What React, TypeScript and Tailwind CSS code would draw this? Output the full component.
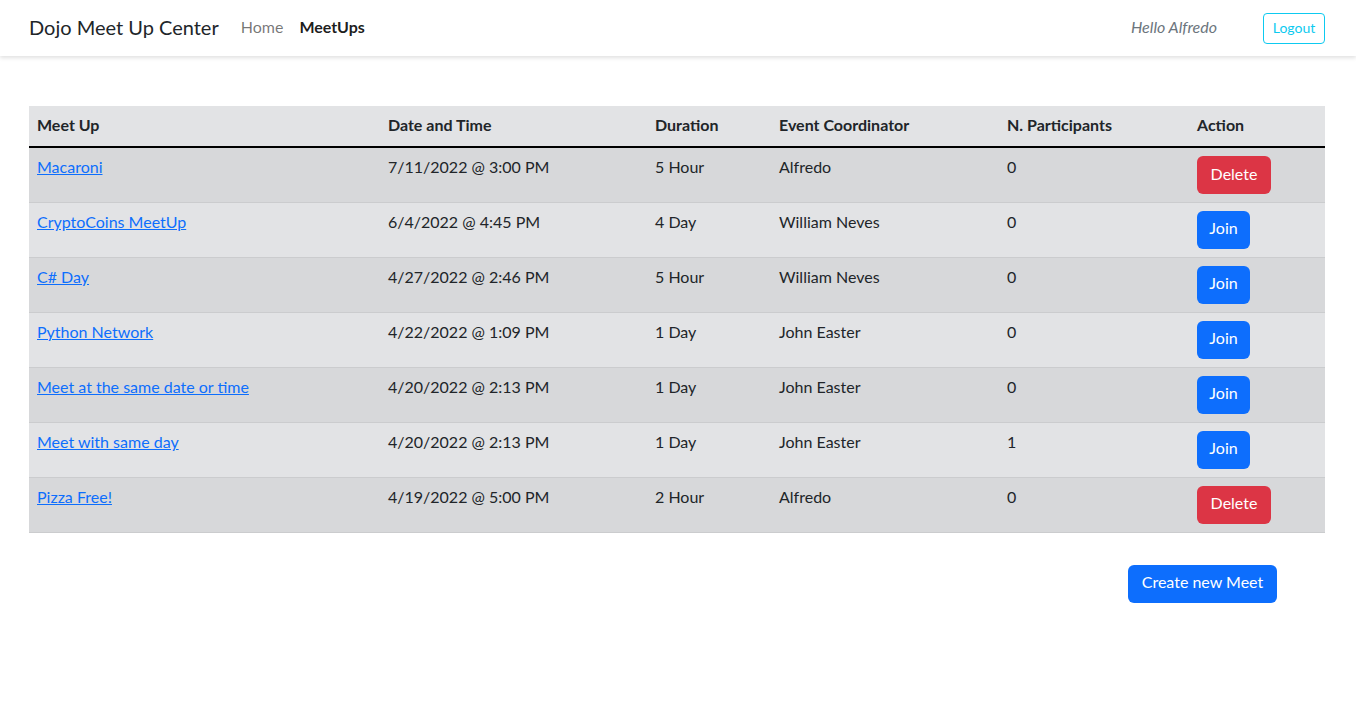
import React from 'react';

type Meet = {
    title: string;
    date: string;
    duration: string;
    coordinator: string;
    participants: number;
    action: 'Delete' | 'Join';
};

const meets: Meet[] = [
    { title: 'Macaroni', date: '7/11/2022 @ 3:00 PM', duration: '5 Hour', coordinator: 'Alfredo', participants: 0, action: 'Delete' },
    { title: 'CryptoCoins MeetUp', date: '6/4/2022 @ 4:45 PM', duration: '4 Day', coordinator: 'William Neves', participants: 0, action: 'Join' },
    { title: 'C# Day', date: '4/27/2022 @ 2:46 PM', duration: '5 Hour', coordinator: 'William Neves', participants: 0, action: 'Join' },
    { title: 'Python Network', date: '4/22/2022 @ 1:09 PM', duration: '1 Day', coordinator: 'John Easter', participants: 0, action: 'Join' },
    { title: 'Meet at the same date or time', date: '4/20/2022 @ 2:13 PM', duration: '1 Day', coordinator: 'John Easter', participants: 0, action: 'Join' },
    { title: 'Meet with same day', date: '4/20/2022 @ 2:13 PM', duration: '1 Day', coordinator: 'John Easter', participants: 1, action: 'Join' },
    { title: 'Pizza Free!', date: '4/19/2022 @ 5:00 PM', duration: '2 Hour', coordinator: 'Alfredo', participants: 0, action: 'Delete' },
];

export default function App(): JSX.Element {
    return (
        <div className="min-h-screen bg-white text-[#212529] font-['Lato','Noto_Sans',sans-serif]">
            {/* Navbar */}
            <nav className="h-14 flex items-center pl-[29px] pr-[31px] pb-[2px] bg-white shadow-[0_2px_4px_rgba(0,0,0,0.12)]">
                <span className="text-xl mr-[22px]">Dojo Meet Up Center</span>
                <a className="text-base text-black/55 mr-4">Home</a>
                <a className="text-base font-bold text-black/90">MeetUps</a>
                <span className="ml-auto italic text-base text-[#6c757d] mr-[46px]">Hello Alfredo</span>
                <button className="h-[31px] w-[62px] mt-[2px] pb-px text-sm text-[#0dcaf0] border border-[#0dcaf0] rounded">Logout</button>
            </nav>

            <div className="pl-[29px] pr-[31px] pt-[50px]">
                <table className="w-full border-collapse text-base">
                    <thead>
                        <tr className="bg-[#e2e3e5] border-b-2 border-black text-left">
                            <th className="w-[351px] pt-[7px] pb-[9px] px-2 h-[40px] font-bold">Meet Up</th>
                            <th className="w-[267px] pt-[7px] pb-[9px] px-2 font-bold">Date and Time</th>
                            <th className="w-[124px] pt-[7px] pb-[9px] px-2 font-bold">Duration</th>
                            <th className="w-[228px] pt-[7px] pb-[9px] px-2 font-bold">Event Coordinator</th>
                            <th className="w-[190px] pt-[7px] pb-[9px] px-2 font-bold">N. Participants</th>
                            <th className="pt-[7px] pb-[9px] px-2 font-bold">Action</th>
                        </tr>
                    </thead>
                    <tbody>
                        {meets.map((m, i) => (
                            <tr
                                key={m.title}
                                className={`${i % 2 === 0 ? 'bg-[#d7d8da]' : 'bg-[#e2e3e5]'} border-b border-[#cbccce] align-top`}
                            >
                                <td className="pt-[7px] px-2 h-[55px]">
                                    <a className="text-[#0d6efd] underline">{m.title}</a>
                                </td>
                                <td className="pt-[7px] px-2">{m.date}</td>
                                <td className="pt-[7px] px-2">{m.duration}</td>
                                <td className="pt-[7px] px-2">{m.coordinator}</td>
                                <td className="pt-[7px] px-2">{m.participants}</td>
                                <td className="pt-2 px-2">
                                    {m.action === 'Delete' ? (
                                        <button className="h-[38px] w-[74px] rounded-md bg-[#dc3545] text-white pb-[3px]">Delete</button>
                                    ) : (
                                        <button className="h-[38px] w-[53px] rounded-md bg-[#0d6efd] text-white pb-[3px]">Join</button>
                                    )}
                                </td>
                            </tr>
                        ))}
                    </tbody>
                </table>

                <div className="flex justify-end pr-12 mt-8">
                    <button className="h-[38px] w-[149px] rounded-md bg-[#0d6efd] text-white text-base pb-[3px]">Create new Meet</button>
                </div>
            </div>
        </div>
    );
}
